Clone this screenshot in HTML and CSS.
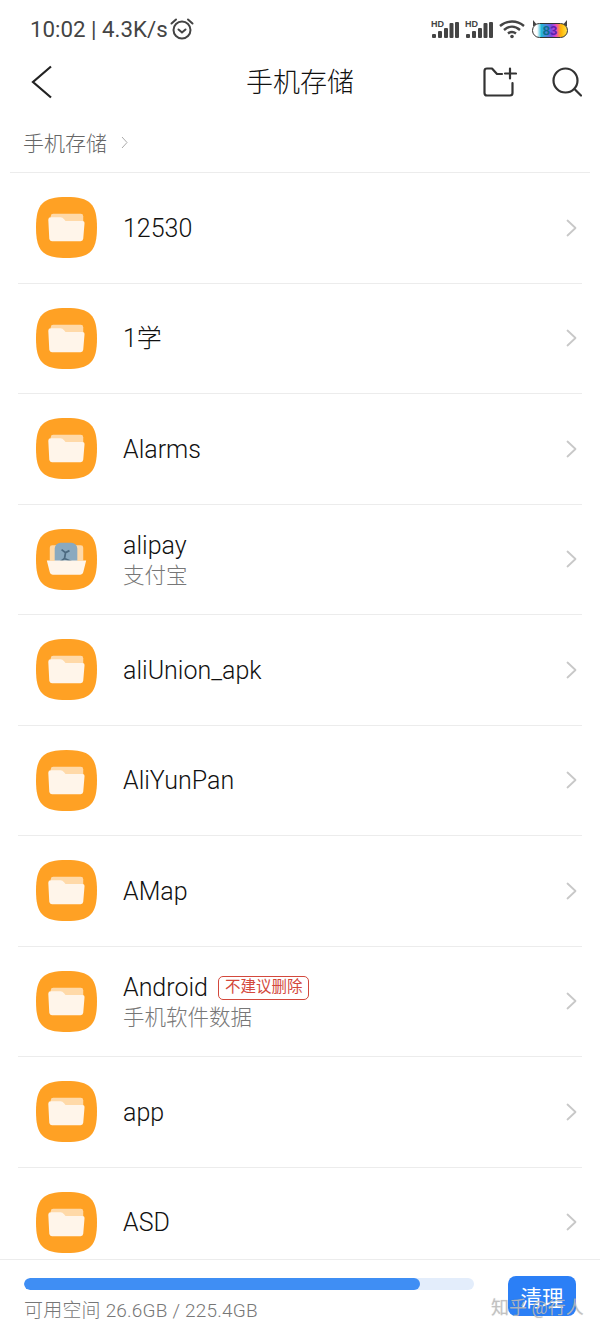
FILE: index.html
```html
<!DOCTYPE html>
<html lang="zh-CN">
<head>
  <meta charset="UTF-8">
  <meta name="viewport" content="width=device-width, initial-scale=1.0">
  <title>手机存储</title>
  <link rel="stylesheet" href="styles.css">
</head>
<body>
<svg class="defs" width="0" height="0">
  <symbol id="squircle" viewBox="0 0 62 62">
    <path d="M31 0C55 0 62 7 62 31C62 55 55 62 31 62C7 62 0 55 0 31C0 7 7 0 31 0Z" fill="#ffa124"/>
  </symbol>
  <symbol id="folder" viewBox="0 0 62 62">
    <use href="#squircle"/>
    <path d="M15 19.500Q15 17 17.500 17H45.500Q48 17 48 19.500V30H15Z" fill="#ffd9a8"/>
    <path d="M12.500 23Q12.500 20.500 15 20.500H25Q27 20.500 28.500 22.500L30 24.500H47Q49.500 24.500 49.300 27L48 42.500Q47.800 45 45.300 45H16.200Q13.700 45 13.500 42.500Z" fill="#fff5ea"/>
  </symbol>
  <symbol id="chev" viewBox="0 0 11 18">
    <path d="M1.500 1.500L9.500 9L1.500 16.500" fill="none" stroke="#c8c8c8" stroke-width="1.800" stroke-linecap="round" stroke-linejoin="round"/>
  </symbol>
</svg>

<div class="page">
  <div class="statusbar">
    <div class="status-left">
      <span>10:02 | 4.3K/s</span>
      <svg width="24" height="24" viewBox="0 0 24 24" fill="none" stroke="#444" stroke-width="2">
        <circle cx="12" cy="13" r="8.500"/>
        <path d="M8.500 12.500L12 15.500L15.500 12.500" stroke-linecap="round"/>
        <path d="M1.500 6.500L6 2.500M22.500 6.500L18 2.500" stroke-linecap="round"/>
      </svg>
    </div>
    <div class="status-right">
      <svg width="29" height="20" viewBox="0 0 29 20">
        <text x="0" y="8" class="hd">HD</text>
        <rect x="1" y="15" width="4" height="4" rx="1" fill="#444"/>
        <rect x="7" y="12" width="4" height="7" rx="1" fill="#444"/>
        <rect x="13" y="9" width="4" height="10" rx="1" fill="#444"/>
        <rect x="18.500" y="4" width="4" height="15" rx="1" fill="#444"/>
        <rect x="24" y="3" width="4" height="16" rx="1" fill="#444"/>
      </svg>
      <svg width="29" height="20" viewBox="0 0 29 20">
        <text x="0" y="8" class="hd">HD</text>
        <rect x="1" y="15" width="4" height="4" rx="1" fill="#444"/>
        <rect x="7" y="12" width="4" height="7" rx="1" fill="#444"/>
        <rect x="13" y="9" width="4" height="10" rx="1" fill="#444"/>
        <rect x="18.500" y="4" width="4" height="15" rx="1" fill="#444"/>
        <rect x="24" y="3" width="4" height="16" rx="1" fill="#444"/>
      </svg>
      <svg width="26" height="20" viewBox="0 0 26 20" fill="none" stroke="#444" stroke-width="2.400">
        <path d="M1 7C8 1 18 1 25 7"/>
        <path d="M5 11C10 6.500 16 6.500 21 11"/>
        <path d="M9 14.500C11.500 12.500 14.500 12.500 17 14.500"/>
        <circle cx="13" cy="17.500" r="1.800" fill="#444" stroke="none"/>
      </svg>
      <div class="battery">
        <span class="ear ear-l"></span>
        <span class="ear ear-r"></span>
        <div class="battery-body"><span class="n8">8</span><span class="n3">3</span></div>
      </div>
    </div>
  </div>

  <header class="toolbar">
    <svg class="back" width="22" height="34" viewBox="0 0 22 34">
      <path d="M20 1.500L2 17L20 32.500" fill="none" stroke="#222" stroke-width="2.200"/>
    </svg>
    <h1 class="title">手机存储</h1>
    <div class="actions">
      <svg width="34" height="30" viewBox="0 0 34 30" fill="none" stroke="#333" stroke-width="2.200" stroke-linecap="round" stroke-linejoin="round">
        <path d="M29.500 16V26Q29.500 28.500 27 28.500H4Q1.500 28.500 1.500 26V4Q1.500 1.500 4 1.500H9L14 7H19"/>
        <path d="M27 1.500V11.500M22 6.500H33"/>
      </svg>
      <svg width="30" height="30" viewBox="0 0 30 30" fill="none" stroke="#333" stroke-width="2.200" stroke-linecap="round">
        <circle cx="13.500" cy="13.500" r="12"/>
        <path d="M23 22.500L29 28.500"/>
      </svg>
    </div>
  </header>

  <nav class="crumbs">
    <span>手机存储</span>
    <svg width="7" height="13" viewBox="0 0 7 13"><path d="M1 1L6 6.500L1 12" fill="none" stroke="#aaa" stroke-width="1"/></svg>
  </nav>

  <ul class="files">
    <li class="file">
      <svg class="icon"><use href="#folder"/></svg>
      <div class="info"><div class="name">12530</div></div>
      <svg class="chev"><use href="#chev"/></svg>
    </li>
    <li class="file">
      <svg class="icon"><use href="#folder"/></svg>
      <div class="info"><div class="name">1学</div></div>
      <svg class="chev"><use href="#chev"/></svg>
    </li>
    <li class="file">
      <svg class="icon"><use href="#folder"/></svg>
      <div class="info"><div class="name">Alarms</div></div>
      <svg class="chev"><use href="#chev"/></svg>
    </li>
    <li class="file">
      <svg class="icon" viewBox="0 0 62 62">
        <use href="#squircle"/>
        <path d="M14 19Q14 16.500 16.500 16.500H45.500Q48 16.500 48 19V32H14Z" fill="#ffd9a8"/>
        <rect x="19" y="14" width="23" height="24" rx="6" fill="#8aa9bf"/>
        <path d="M26 21L30 24L34 22M30 24L29 30L25 33M29 30L36 33" fill="none" stroke="#4c6a80" stroke-width="1.800"/>
        <path d="M11 32H51L48 44Q47.500 46.500 45 46.500H17Q14.500 46.500 14 44Z" fill="#fff5ea"/>
      </svg>
      <div class="info">
        <div class="name">alipay</div>
        <div class="sub">支付宝</div>
      </div>
      <svg class="chev"><use href="#chev"/></svg>
    </li>
    <li class="file">
      <svg class="icon"><use href="#folder"/></svg>
      <div class="info"><div class="name">aliUnion_apk</div></div>
      <svg class="chev"><use href="#chev"/></svg>
    </li>
    <li class="file">
      <svg class="icon"><use href="#folder"/></svg>
      <div class="info"><div class="name">AliYunPan</div></div>
      <svg class="chev"><use href="#chev"/></svg>
    </li>
    <li class="file">
      <svg class="icon"><use href="#folder"/></svg>
      <div class="info"><div class="name">AMap</div></div>
      <svg class="chev"><use href="#chev"/></svg>
    </li>
    <li class="file">
      <svg class="icon"><use href="#folder"/></svg>
      <div class="info">
        <div class="name-row">
          <div class="name">Android</div>
          <span class="tag">不建议删除</span>
        </div>
        <div class="sub">手机软件数据</div>
      </div>
      <svg class="chev"><use href="#chev"/></svg>
    </li>
    <li class="file">
      <svg class="icon"><use href="#folder"/></svg>
      <div class="info"><div class="name">app</div></div>
      <svg class="chev"><use href="#chev"/></svg>
    </li>
    <li class="file">
      <svg class="icon"><use href="#folder"/></svg>
      <div class="info"><div class="name">ASD</div></div>
      <svg class="chev"><use href="#chev"/></svg>
    </li>
  </ul>

  <footer class="storage">
    <div class="usage">
      <div class="bar"><div class="bar-fill" style="width: 88%"></div></div>
      <div class="space">可用空间 26.6GB / 225.4GB</div>
    </div>
    <button class="clean">清理</button>
  </footer>

  <div class="watermark">知乎 @行人</div>
</div>
</body>
</html>
```

FILE: styles.css
```css
* {
  box-sizing: border-box;
}

html, body {
  margin: 0;
  padding: 0;
  background: #fff;
}

body {
  font-family: Roboto, "Noto Sans CJK SC", sans-serif;
  color: #222;
}

.defs {
  position: absolute;
}

.page {
  position: relative;
  width: 600px;
  height: 1333px;
  display: flex;
  flex-direction: column;
  overflow: hidden;
}

/* status bar */
.statusbar {
  height: 58px;
  flex: none;
  padding: 0 32px 0 30px;
  display: flex;
  align-items: center;
  justify-content: space-between;
}

.status-left {
  display: flex;
  align-items: center;
  gap: 2px;
  font-size: 22.300px;
  color: #444;
}

.status-right {
  display: flex;
  align-items: center;
  gap: 5px;
}

.hd {
  font: bold 9px "Liberation Sans", sans-serif;
  fill: #444;
}

.battery {
  position: relative;
  width: 36px;
  height: 18px;
  margin-left: 2px;
}

.battery-body {
  position: absolute;
  left: 0;
  right: 0;
  bottom: 0;
  height: 15px;
  border: 1.500px solid #333;
  border-radius: 8px;
  background: linear-gradient(90deg, #fff 0 12%, #23b7d8 25%, #7a4de0 55%, #ee45c0 68%, #ffb300 82%, #ffe14a 100%);
  display: flex;
  justify-content: center;
  align-items: center;
  font: bold 13px/1 "Liberation Sans", sans-serif;
}

.n8 {
  color: #0a6f8c;
}

.n3 {
  color: #5c1fb0;
}

.ear {
  position: absolute;
  top: 0;
  width: 5px;
  height: 6px;
  background: #444;
}

.ear-l {
  left: 1px;
  clip-path: polygon(0 0, 100% 100%, 0 100%);
}

.ear-r {
  right: 1px;
  clip-path: polygon(100% 0, 100% 100%, 0 100%);
}

/* toolbar */
.toolbar {
  height: 47px;
  flex: none;
  padding: 0 18px;
  display: grid;
  grid-template-columns: 1fr auto 1fr;
  align-items: center;
}

.back {
  margin-left: 13px;
}

.title {
  margin: -2px 0 0;
  font-size: 27px;
  font-weight: 300;
  color: #111;
}

.actions {
  display: flex;
  align-items: center;
  justify-content: flex-end;
  gap: 35px;
}

/* breadcrumb */
.crumbs {
  height: 68px;
  flex: none;
  margin: 0 10px;
  padding: 7px 13px 0;
  display: flex;
  align-items: center;
  gap: 14px;
  font-size: 21px;
  font-weight: 300;
  color: #666;
  border-bottom: 1px solid #ececec;
}

/* file list */
.files {
  flex: 1;
  min-height: 0;
  margin: 0;
  padding: 0;
  list-style: none;
  overflow: hidden;
}

.file {
  height: 110.500px;
  margin: 0 18px;
  padding: 0 5px 0 18px;
  display: flex;
  align-items: center;
  border-bottom: 1px solid #ececec;
}

.icon {
  width: 61px;
  height: 61px;
  flex: none;
}

.info {
  flex: 1;
  margin-left: 26px;
  padding-top: 2px;
}

.name {
  font-size: 25px;
  font-weight: 300;
  line-height: 32px;
  color: #111;
}

.sub {
  font-size: 21.500px;
  font-weight: 300;
  line-height: 28px;
  color: #777;
}

.name-row {
  display: flex;
  align-items: center;
  gap: 10px;
}

.tag {
  height: 24px;
  padding: 0 6px;
  border: 1.500px solid #d3483c;
  border-radius: 5px;
  font-size: 15.500px;
  line-height: 20px;
  color: #d3483c;
}

.chev {
  width: 11px;
  height: 18px;
  flex: none;
}

/* storage footer */
.storage {
  height: 74px;
  flex: none;
  padding: 18px 24px 0 24px;
  display: flex;
  align-items: flex-start;
  justify-content: space-between;
  border-top: 1px solid #ececec;
  background: #fff;
}

.usage {
  width: 450px;
}

.bar {
  height: 12px;
  border-radius: 6px;
  background: #e3edfb;
  overflow: hidden;
}

.bar-fill {
  height: 100%;
  border-radius: 6px;
  background: #3f8ef4;
}

.space {
  margin-top: 9px;
  font-size: 19px;
  font-weight: 300;
  line-height: 24px;
  letter-spacing: 0.200px;
  color: #777;
}

.clean {
  width: 68px;
  height: 40px;
  margin-top: -2px;
  border: none;
  border-radius: 8px;
  background: #2b7ff6;
  color: #fff;
  font-family: "Noto Sans CJK SC", sans-serif;
  font-size: 21.500px;
  padding: 0;
}

.watermark {
  position: absolute;
  left: 491px;
  top: 1296px;
  font-size: 18px;
  line-height: 24px;
  color: rgba(190, 190, 190, 0.85);
  text-shadow: 0 0 1px rgba(80, 80, 80, 0.25);
  white-space: nowrap;
}
```
